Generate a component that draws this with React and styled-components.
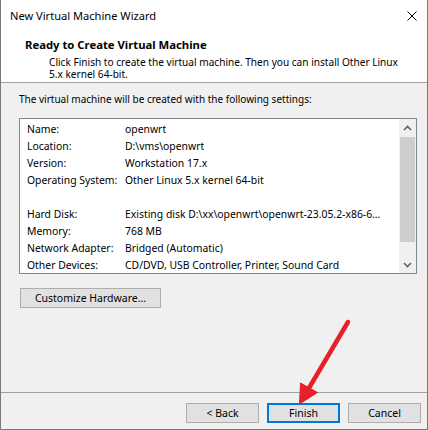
import React from "react";
import styled, { createGlobalStyle, css } from "styled-components";

const GlobalStyle = createGlobalStyle`
  html, body { margin: 0; padding: 0; background: #ffffff; }
  body { font-family: "Noto Sans", "Open Sans", sans-serif; color: #000; }
  * { box-sizing: border-box; }
`;

const Stage = styled.div`
  position: relative;
  width: 428px;
  height: 430px;
  overflow: hidden;
`;

const Window = styled.div`
  width: 428px;
  height: 430px;
  display: flex;
  flex-direction: column;
  border-left: 1px solid #7a7a7a;
  border-right: 1px solid #7a7a7a;
  border-bottom: 1px solid #7a7a7a;
  background: #f0f0f0;
  font-family: "Noto Sans", "Open Sans", sans-serif;
  font-size: 10px;
`;

const TitleBar = styled.div`
  height: 31px;
  flex: none;
  display: flex;
  align-items: center;
  justify-content: space-between;
  padding: 0 10px 0 9px;
  background: #ffffff;
`;

const Title = styled.span`
  font-size: 11.1px;
  line-height: 16px;
  color: #000;
`;

const CloseIcon = styled.svg`
  display: block;
  width: 10px;
  height: 10px;
`;

const Header = styled.div`
  height: 52px;
  flex: none;
  background: #ffffff;
  border-bottom: 1px solid #a0a0a0;
  padding: 7px 0 0 24px;
`;

const Heading = styled.div`
  font-weight: 700;
  font-size: 11.3px;
  line-height: 14px;
`;

const Description = styled.div`
  margin-top: 4px;
  padding-left: 24px;
  line-height: 12px;
  font-size: 10.1px;
  width: 384px;
`;

const Body = styled.div`
  flex: 1;
  display: flex;
  flex-direction: column;
  align-items: flex-start;
  padding: 9px 0 0 18px;
`;

const Intro = styled.div`
  line-height: 14px;
`;

const ListBox = styled.div`
  margin-top: 12px;
  width: 398px;
  height: 156px;
  border: 1px solid #828790;
  background: #ffffff;
  display: flex;
`;

const ListContent = styled.div`
  flex: 1;
  overflow: hidden;
  padding: 2px 0 0 7px;
  font-size: 10.4px;
`;

const Row = styled.div`
  display: flex;
  height: 17px;
  line-height: 17px;
  white-space: nowrap;
`;

const Label = styled.span`
  width: 98px;
  flex: none;
`;

const Value = styled.span`
  overflow: hidden;
`;

const ScrollBar = styled.div`
  width: 17px;
  flex: none;
  display: flex;
  flex-direction: column;
  background: #f0f0f0;
`;

const ScrollArrow = styled.div`
  height: 17px;
  flex: none;
  display: flex;
  align-items: center;
  justify-content: center;
`;

const Track = styled.div`
  flex: 1;
  display: flex;
  justify-content: center;
`;

const Thumb = styled.div`
  margin-top: 1px;
  width: 15px;
  height: 105px;
  background: #cdcdcd;
`;

const Button = styled.button`
  height: 20px;
  width: ${(p) => p.$width || 73}px;
  padding: 0;
  margin: 0;
  font-family: "Noto Sans", "Open Sans", sans-serif;
  font-size: 10.5px;
  color: #000;
  background: #e1e1e1;
  border: 1px solid #adadad;
  display: flex;
  align-items: center;
  justify-content: center;
  ${(p) =>
    p.$default &&
    css`
      border: 2px solid #0078d7;
    `}
`;

const CustomizeButton = styled(Button)`
  margin-top: 14px;
  margin-left: 1px;
`;

const Footer = styled.div`
  height: 37px;
  flex: none;
  border-top: 1px solid #a0a0a0;
  display: flex;
  justify-content: flex-end;
  align-items: flex-start;
  gap: 8px;
  padding: 10px 6px 0 0;
`;

const Overlay = styled.svg`
  position: absolute;
  left: 0;
  top: 0;
  pointer-events: none;
`;

const rows = [
  ["Name:", "openwrt"],
  ["Location:", "D:\\vms\\openwrt"],
  ["Version:", "Workstation 17.x"],
  ["Operating System:", "Other Linux 5.x kernel 64-bit"],
  ["", ""],
  ["Hard Disk:", "Existing disk D:\\xx\\openwrt\\openwrt-23.05.2-x86-6\u2026"],
  ["Memory:", "768 MB"],
  ["Network Adapter:", "Bridged (Automatic)"],
  ["Other Devices:", "CD/DVD, USB Controller, Printer, Sound Card"],
];

const Chevron = ({ up }) => (
  <svg width="9" height="6" viewBox="0 0 9 6">
    <path
      d={up ? "M1 5 L4.5 1.5 L8 5" : "M1 1 L4.5 4.5 L8 1"}
      fill="none"
      stroke="#606060"
      strokeWidth="1.6"
    />
  </svg>
);

export default function App() {
  return (
    <Stage>
      <GlobalStyle />
      <Window>
        <TitleBar>
          <Title>New Virtual Machine Wizard</Title>
          <CloseIcon viewBox="0 0 10 10">
            <path d="M0.5 0.5 L9.5 9.5 M9.5 0.5 L0.5 9.5" stroke="#000" strokeWidth="1" fill="none" />
          </CloseIcon>
        </TitleBar>
        <Header>
          <Heading>Ready to Create Virtual Machine</Heading>
          <Description>
            Click Finish to create the virtual machine. Then you can install Other Linux 5.x kernel 64-bit.
          </Description>
        </Header>
        <Body>
          <Intro>The virtual machine will be created with the following settings:</Intro>
          <ListBox>
            <ListContent>
              {rows.map(([l, v], i) => (
                <Row key={i}>
                  <Label>{l}</Label>
                  <Value>{v}</Value>
                </Row>
              ))}
            </ListContent>
            <ScrollBar>
              <ScrollArrow>
                <Chevron up />
              </ScrollArrow>
              <Track>
                <Thumb />
              </Track>
              <ScrollArrow>
                <Chevron />
              </ScrollArrow>
            </ScrollBar>
          </ListBox>
          <CustomizeButton $width={141}>Customize Hardware…</CustomizeButton>
        </Body>
        <Footer>
          <Button>&lt; Back</Button>
          <Button $default>Finish</Button>
          <Button>Cancel</Button>
        </Footer>
      </Window>
      <Overlay width="428" height="430" viewBox="0 0 428 430">
        <line x1="348" y1="322" x2="309" y2="388" stroke="#e8202a" strokeWidth="4.5" strokeLinecap="round" />
        <polygon points="299.5,404 300.5,383 317.5,392.5" fill="#e8202a" stroke="#e8202a" strokeWidth="1" strokeLinejoin="round" />
      </Overlay>
    </Stage>
  );
}
